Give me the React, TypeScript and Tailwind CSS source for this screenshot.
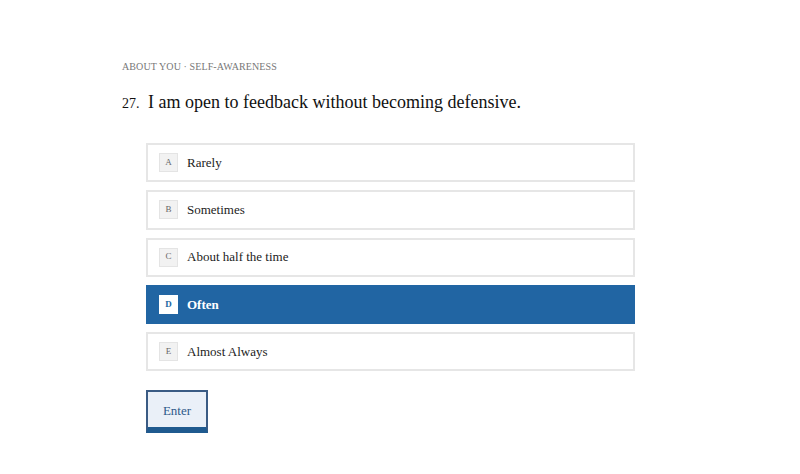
const options = [
  { key: 'A', label: 'Rarely' },
  { key: 'B', label: 'Sometimes' },
  { key: 'C', label: 'About half the time' },
  { key: 'D', label: 'Often', selected: true },
  { key: 'E', label: 'Almost Always' },
];

export default function App() {
  return (
    <div
      className="min-h-[474px] w-[800px] bg-white text-[#111]"
      style={{ fontFamily: '"Liberation Serif", "DejaVu Serif", serif' }}
    >
      <div className="pl-[122px] pt-[61px]">
        <p className="text-[10px] uppercase leading-[12px] tracking-[0.01em] text-[#777]">
          About you · Self-awareness
        </p>
        <h1 className="mt-[17px] flex items-baseline text-[18px] leading-[24px]">
          <span className="w-[26px] text-[14px]">27.</span>
          <span>I am open to feedback without becoming defensive.</span>
        </h1>

        <div className="ml-[24px] mt-[27px] flex w-[489px] flex-col gap-[8px]">
          {options.map((o) => (
            <div
              key={o.key}
              className={`flex h-[39.25px] items-center border-2 pl-[11px] ${
                o.selected
                  ? 'border-[#2165a3] bg-[#2165a3] text-white'
                  : 'border-[#e6e6e6] bg-white text-[#1c1c1c]'
              }`}
            >
              <span
                className={`flex h-[19px] w-[19px] items-center justify-center text-[9px] ${
                  o.selected
                    ? 'bg-white font-bold text-[#2165a3]'
                    : 'border border-[#e4e4e4] bg-[#f2f2f2] text-[#666]'
                }`}
              >
                {o.key}
              </span>
              <span className={`ml-[9px] text-[13px] ${o.selected ? 'font-bold' : ''}`}>
                {o.label}
              </span>
            </div>
          ))}
        </div>

        <button className="ml-[24px] mt-[19px] flex h-[43px] w-[62px] items-start justify-center border-2 border-b-[6px] border-[#3a5b84] border-b-[#1f5a8f] bg-[#eaf0f8] pt-[9px] text-[13px] text-[#2e5a8a]">
          Enter
        </button>
      </div>
    </div>
  );
}
